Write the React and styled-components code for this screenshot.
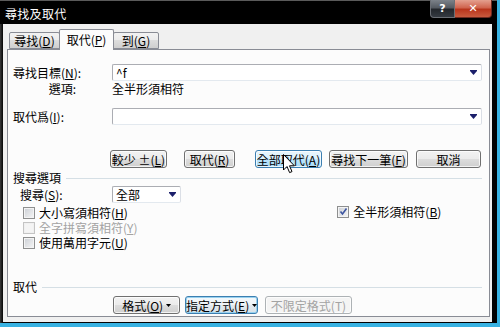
import styled, { createGlobalStyle } from "styled-components";

const GlobalStyle = createGlobalStyle`
  html, body {
    margin: 0;
    padding: 0;
    background: #38b2e2;
  }
  body {
    font-family: "Noto Sans CJK TC", "Noto Sans", sans-serif;
    font-size: 12px;
    color: #000;
  }
`;

const Arrow = ({ color = "#1b1f6b" }) => (
  <svg width="7" height="5" viewBox="0 0 7 5">
    <rect x="0" y="0" width="7" height="1" fill={color} />
    <path d="M0 1 H7 L3.5 5 Z" fill={color} />
  </svg>
);

const SmallArrow = () => (
  <svg width="5" height="3" viewBox="0 0 5 3">
    <path d="M0 0 H5 L2.5 3 Z" fill="#000" />
  </svg>
);

const Cursor = () => (
  <svg width="13" height="20" viewBox="0 0 13 20">
    <path
      d="M0.5 0.5 V16 L4 12.5 L6.6 18.6 L9 17.6 L6.5 11.8 H11.4 Z"
      fill="#fff"
      stroke="#000"
      strokeWidth="1"
      strokeLinejoin="round"
    />
  </svg>
);

const Check = () => (
  <svg width="9" height="9" viewBox="0 0 9 9">
    <path d="M1.5 4.5 L3.5 7 L7.5 1.5" fill="none" stroke="#3d55a0" strokeWidth="1.6" />
  </svg>
);

const App = () => {
  return (
    <>
      <GlobalStyle />
      <Window>
        <TitleBar>
          <Title>尋找及取代</Title>
          <Controls>
            <HelpButton>?</HelpButton>
            <CloseButton>✕</CloseButton>
          </Controls>
        </TitleBar>
        <Client>
          <Tabs>
            <Tab $w={51}>
              尋找(<u>D</u>)
            </Tab>
            <Tab $w={55} $active>
              取代(<u>P</u>)
            </Tab>
            <Tab $w={46}>
              到(<u>G</u>)
            </Tab>
          </Tabs>
          <Panel>
            <FieldRow $top={14}>
              <Label>
                尋找目標(<u>N</u>):
              </Label>
              <Combo $w={370}>
                <ComboText>^f</ComboText>
                <Arrow />
              </Combo>
            </FieldRow>
            <FieldRow $top={1} $h={13}>
              <Label $align="right" $pad={36}>
                選項:
              </Label>
              <span>全半形須相符</span>
            </FieldRow>
            <FieldRow $top={13}>
              <Label>
                取代爲(<u>I</u>):
              </Label>
              <Combo $w={370}>
                <ComboText />
                <Arrow />
              </Combo>
            </FieldRow>

            <ButtonRow $top={25} $indent={97}>
              <Button $w={57}>
                較少 ±(<u>L</u>)
              </Button>
              <Button $w={51} $ml={17}>
                取代(<u>R</u>)
              </Button>
              <Button $w={67} $ml={20} $hot>
                全部取代(<u>A</u>)
                <CursorSpot>
                  <Cursor />
                </CursorSpot>
              </Button>
              <Button $w={79} $ml={7}>
                尋找下一筆(<u>F</u>)
              </Button>
              <Button $w={65} $ml={8}>
                取消
              </Button>
            </ButtonRow>

            <GroupHeader $top={4}>
              <span>搜尋選項</span>
              <Rule />
            </GroupHeader>

            <FieldRow $top={2}>
              <Label $indent={7} $wd={92}>
                搜尋(<u>S</u>):
              </Label>
              <Combo $w={69}>
                <ComboText>全部</ComboText>
                <Arrow />
              </Combo>
            </FieldRow>

            <Options>
              <OptionColumn $indent={10}>
                <CheckRow>
                  <Box />
                  大小寫須相符(<u>H</u>)
                </CheckRow>
                <CheckRow $disabled>
                  <Box $disabled />
                  全字拼寫須相符(<u>Y</u>)
                </CheckRow>
                <CheckRow>
                  <Box />
                  使用萬用字元(<u>U</u>)
                </CheckRow>
              </OptionColumn>
              <OptionColumn $indent={0} $up={1}>
                <CheckRow>
                  <Box>
                    <Check />
                  </Box>
                  全半形須相符(<u>B</u>)
                </CheckRow>
              </OptionColumn>
            </Options>

            <GroupHeader $top={31}>
              <span>取代</span>
              <Rule />
            </GroupHeader>

            <ButtonRow $top={3} $indent={100}>
              <Button $w={67}>
                格式(<u>O</u>)&nbsp;
                <SmallArrow />
              </Button>
              <Button $w={73} $ml={5} $focus>
                指定方式(<u>E</u>)&nbsp;
                <SmallArrow />
              </Button>
              <Button $w={87} $ml={7} disabled>
                不限定格式(T)
              </Button>
            </ButtonRow>
          </Panel>
        </Client>
      </Window>
    </>
  );
};

const Window = styled.div`
  width: 497px;
  height: 323px;
  display: flex;
  flex-direction: column;
  background: linear-gradient(90deg, #3a3a3a 0, #050505 3px, #000 100%);
`;

const TitleBar = styled.div`
  height: 24px;
  display: flex;
  align-items: center;
  justify-content: space-between;
  background: #000;
  border-top: 1px solid #5a5a5a;
  box-sizing: border-box;
`;

const Title = styled.div`
  color: #fff;
  font-size: 12px;
  padding-left: 5px;
  margin-top: 2px;
  letter-spacing: 0.3px;
`;

const Controls = styled.div`
  align-self: flex-start;
  display: flex;
  margin-right: 5px;
  margin-top: -1px;
`;

const HelpButton = styled.div`
  width: 25px;
  height: 18px;
  box-sizing: border-box;
  border: 1px solid #6b6f75;
  border-top: none;
  border-radius: 0 0 0 4px;
  background: linear-gradient(#7c8289 0%, #555b62 45%, #23272c 55%, #343a41 100%);
  color: #fff;
  font-family: "DejaVu Sans", sans-serif;
  font-weight: bold;
  font-size: 11px;
  display: flex;
  align-items: center;
  justify-content: center;
`;

const CloseButton = styled.div`
  width: 37px;
  height: 18px;
  box-sizing: border-box;
  border: 1px solid #6e2a20;
  border-top: none;
  border-left: none;
  border-radius: 0 0 4px 0;
  background: linear-gradient(#e4a08f 0%, #d0654f 45%, #b8351c 55%, #c85a3e 100%);
  color: #fff;
  font-family: "DejaVu Sans", sans-serif;
  font-weight: bold;
  font-size: 11px;
  display: flex;
  align-items: center;
  justify-content: center;
`;

const Client = styled.div`
  flex: 1;
  margin: 0 5px 1px 3px;
  background: #f0f0f0;
  display: flex;
  flex-direction: column;
  padding-top: 5px;
`;

const Tabs = styled.div`
  display: flex;
  align-items: flex-end;
  height: 20px;
  padding-left: 6px;
  position: relative;
  z-index: 1;
`;

const Tab = styled.div`
  box-sizing: border-box;
  width: ${(p) => p.$w}px;
  height: ${(p) => (p.$active ? 21 : 17)}px;
  margin-bottom: ${(p) => (p.$active ? -1 : 0)}px;
  border: 1px solid #898c95;
  border-bottom: ${(p) => (p.$active ? "none" : "1px solid #898c95")};
  border-radius: 2px 2px 0 0;
  background: ${(p) =>
    p.$active ? "#fcfcfc" : "linear-gradient(#f2f2f2 0%, #ebebeb 50%, #dddddd 50%, #cfcfcf 100%)"};
  display: flex;
  align-items: center;
  justify-content: center;
  font-size: 12px;
  line-height: 14px;
  margin-left: ${(p) => (p.$active ? -1 : 0)}px;
  margin-right: ${(p) => (p.$active ? -1 : 0)}px;
  padding-top: ${(p) => (p.$active ? 0 : 1)}px;
`;

const Panel = styled.div`
  flex: 1;
  margin: 0 2px 5px 4px;
  border: 1px solid #898c95;
  background: #fcfcfc;
  display: flex;
  flex-direction: column;
  padding: 0 7px 0 5px;
`;

const FieldRow = styled.div`
  display: flex;
  align-items: center;
  height: ${(p) => p.$h || 17}px;
  margin-top: ${(p) => p.$top}px;
  line-height: 13px;
`;

const Label = styled.div`
  box-sizing: border-box;
  width: ${(p) => p.$wd || 99}px;
  margin-left: ${(p) => p.$indent || 0}px;
  text-align: ${(p) => p.$align || "left"};
  padding-right: ${(p) => p.$pad || 0}px;
  white-space: nowrap;
`;

const Combo = styled.div`
  box-sizing: border-box;
  width: ${(p) => p.$w}px;
  height: 17px;
  background: #fff;
  border: 1px solid #abadb3;
  border-right-color: #dbdfe6;
  border-bottom-color: #e3e9ef;
  border-radius: 2px;
  display: flex;
  align-items: center;
  padding: 0 4px 0 3px;
`;

const ComboText = styled.span`
  flex: 1;
  line-height: 13px;
`;

const ButtonRow = styled.div`
  display: flex;
  margin-top: ${(p) => p.$top}px;
  padding-left: ${(p) => p.$indent}px;
`;

const Button = styled.button`
  position: relative;
  box-sizing: border-box;
  width: ${(p) => p.$w}px;
  height: 18px;
  margin: 0 0 0 ${(p) => p.$ml || 0}px;
  padding: 0;
  font-family: inherit;
  font-size: 12px;
  line-height: 13px;
  white-space: nowrap;
  color: ${(p) => (p.disabled ? "#a3a3a3" : "#000")};
  border: 1px solid
    ${(p) => (p.$hot || p.$focus ? "#3c7fb1" : p.disabled ? "#adb2b5" : "#707070")};
  border-radius: 3px;
  background: ${(p) =>
    p.$hot
      ? "linear-gradient(#eaf6fd 0%, #d9f0fc 50%, #bee6fd 50%, #a7d9f5 100%)"
      : p.disabled
      ? "#f4f4f4"
      : p.$focus
      ? "linear-gradient(#f4f9fc 0%, #eef3f6 50%, #e3eaef 50%, #d8e1e7 100%)"
      : "linear-gradient(#f2f2f2 0%, #ebebeb 50%, #dddddd 50%, #cfcfcf 100%)"};
  box-shadow: inset 0 0 0 1px
    ${(p) => (p.$focus ? "#98d1ef" : "rgba(255, 255, 255, 0.75)")};
  display: flex;
  align-items: center;
  justify-content: center;
`;

const CursorSpot = styled.div`
  position: absolute;
  left: 27px;
  top: 3px;
  line-height: 0;
`;

const GroupHeader = styled.div`
  display: flex;
  align-items: center;
  height: 12px;
  line-height: 12px;
  margin-top: ${(p) => p.$top}px;
`;

const Rule = styled.div`
  flex: 1;
  height: 1px;
  background: #d5dfe5;
  margin: 1px 0 0 5px;
`;

const Options = styled.div`
  display: flex;
  margin-top: 2px;
`;

const OptionColumn = styled.div`
  display: flex;
  flex-direction: column;
  width: ${(p) => (p.$indent ? 326 : 150)}px;
  padding-left: ${(p) => p.$indent}px;
  margin-top: ${(p) => -(p.$up || 0)}px;
`;

const CheckRow = styled.div`
  display: flex;
  align-items: center;
  height: 15px;
  line-height: 13px;
  color: ${(p) => (p.$disabled ? "#a3a3a3" : "#000")};
  white-space: nowrap;
`;

const Box = styled.div`
  box-sizing: border-box;
  width: 12px;
  height: 12px;
  margin-right: 4px;
  border: 1px solid ${(p) => (p.$disabled ? "#c4c4c4" : "#8e8f8f")};
  background: ${(p) =>
    p.$disabled ? "#f4f4f4" : "linear-gradient(135deg, #cbcfd5 0%, #f6f6f6 100%)"};
  box-shadow: inset 0 0 0 1px ${(p) => (p.$disabled ? "#f0f0f0" : "#f4f4f4")};
  display: flex;
  align-items: center;
  justify-content: center;
`;

export default App;
